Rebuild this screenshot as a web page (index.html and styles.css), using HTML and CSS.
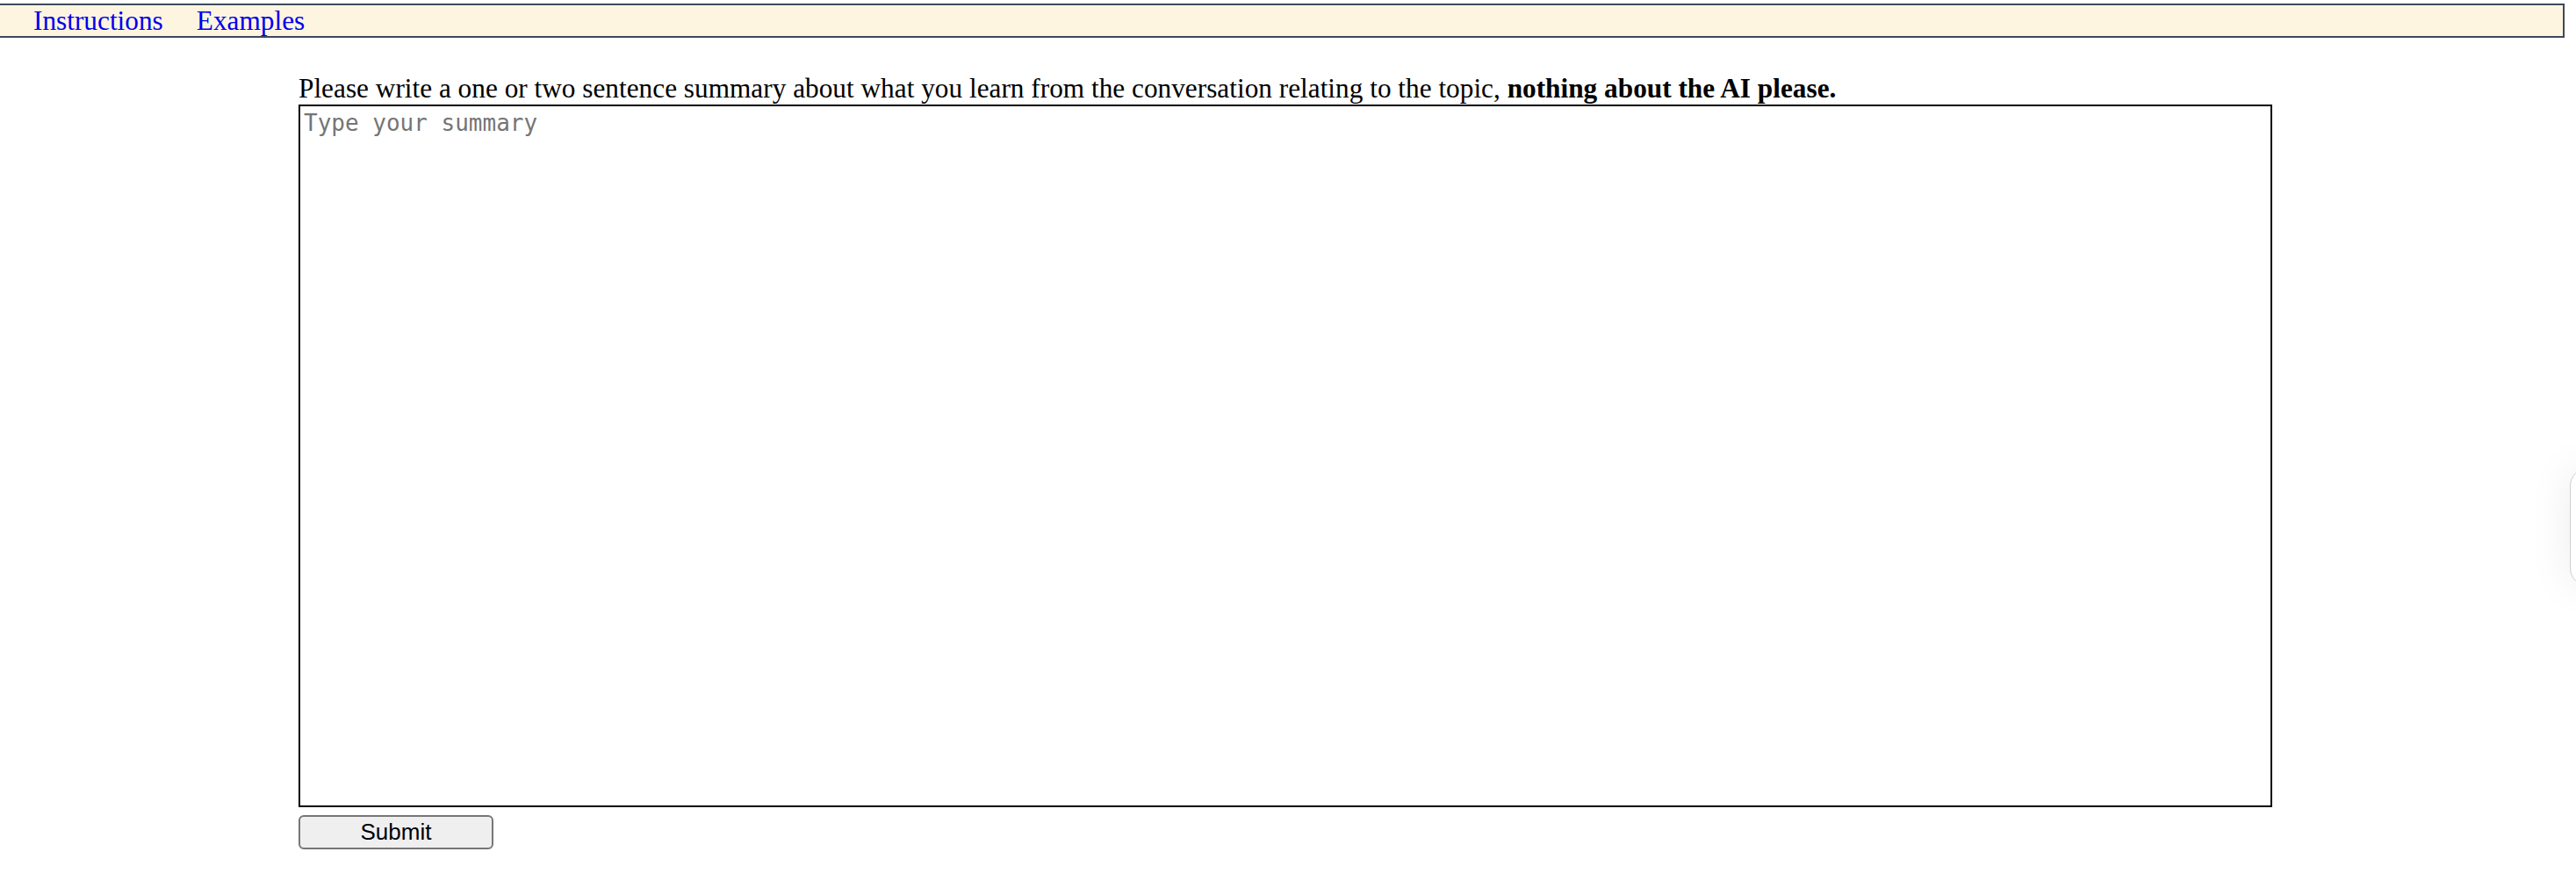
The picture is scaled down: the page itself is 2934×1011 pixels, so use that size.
FILE: index.html
```html
<!DOCTYPE html>
<html lang="en">
<head>
    <meta charset="UTF-8">
    <meta name="viewport" content="width=device-width, initial-scale=1.0">
    <title>Conversation Summary</title>
    <link rel="stylesheet" href="styles.css">
</head>
<body>
    <!-- Top navigation -->
    <nav class="topbar">
        <a href="#instructions">Instructions</a>
        <a href="#examples">Examples</a>
    </nav>

    <main class="summary">
        <label for="summary" class="prompt">Please write a one or two sentence summary about what you learn from the conversation relating to the topic, <b>nothing about the AI please.</b></label>
        <textarea id="summary" placeholder="Type your summary"></textarea>
        <button type="button" class="submit">Submit</button>
    </main>

    <!-- side tab -->
    <div class="side-tab"></div>
</body>
</html>
```

FILE: styles.css
```css
body {
    margin: 0;
    font-family: "Liberation Serif", "Times New Roman", serif;
    font-size: 31.3px;
    color: #000;
    background: #fff;
    overflow: hidden;
}
.topbar {
    display: flex;
    gap: 38px;
    margin: 4px 13px 0 -2px;
    padding-left: 38px;
    background-color: #fef5e0;
    border: 2px solid #3c4a5c;
    line-height: 35px;
}
.topbar a {
    color: #0000ee;
    text-decoration: none;
}
.summary {
    width: 2248px;
    margin-left: 340px;
    padding-top: 40px;
}
.prompt {
    display: block;
    line-height: 36px;
}
textarea {
    display: block;
    box-sizing: border-box;
    width: 2248px;
    height: 800px;
    padding: 4px;
    border: 2px solid #000;
    font-family: "DejaVu Sans Mono", monospace;
    font-size: 26px;
    resize: none;
}
textarea::placeholder {
    color: #757575;
}
.submit {
    display: block;
    box-sizing: border-box;
    width: 222px;
    height: 39px;
    margin-top: 9px;
    padding: 0;
    background-color: #efefef;
    border: 2px solid #767676;
    border-radius: 6px;
    font-family: "Liberation Sans", Arial, sans-serif;
    font-size: 26px;
    color: #000;
}
.side-tab {
    position: fixed;
    top: 533px;
    right: -40px;
    width: 45px;
    height: 132px;
    background: #fff;
    border: 1px solid #cfcfcf;
    border-radius: 20px;
    box-shadow: 0 0 50px rgba(0, 0, 0, 0.08);
}
```
